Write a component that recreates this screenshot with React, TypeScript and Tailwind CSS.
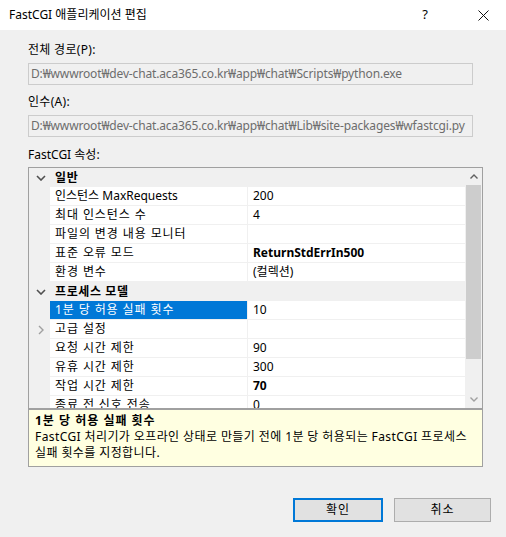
import React from "react";

type Row =
  | { kind: "cat"; label: string }
  | { kind: "prop"; name: string; value: string; bold?: boolean; selected?: boolean; expander?: boolean };

const rows: Row[] = [
  { kind: "cat", label: "일반" },
  { kind: "prop", name: "인스턴스 MaxRequests", value: "200" },
  { kind: "prop", name: "최대 인스턴스 수", value: "4" },
  { kind: "prop", name: "파일의 변경 내용 모니터", value: "" },
  { kind: "prop", name: "표준 오류 모드", value: "ReturnStdErrIn500", bold: true },
  { kind: "prop", name: "환경 변수", value: "(컬렉션)" },
  { kind: "cat", label: "프로세스 모델" },
  { kind: "prop", name: "1분 당 허용 실패 횟수", value: "10", selected: true },
  { kind: "prop", name: "고급 설정", value: "", expander: true },
  { kind: "prop", name: "요청 시간 제한", value: "90" },
  { kind: "prop", name: "유휴 시간 제한", value: "300" },
  { kind: "prop", name: "작업 시간 제한", value: "70", bold: true },
  { kind: "prop", name: "종료 전 신호 전송", value: "0" },
];

const ChevronDown = () => (
  <svg width="10" height="6" viewBox="0 0 10 6">
    <polyline points="1,1 5,5 9,1" fill="none" stroke="#505050" strokeWidth="1.6" />
  </svg>
);

const ChevronRight = () => (
  <svg width="6" height="10" viewBox="0 0 6 10">
    <polyline points="1,1 5,5 1,9" fill="none" stroke="#a0a0a0" strokeWidth="1.4" />
  </svg>
);

// hangul-only labels render a bit wider in the original (Malgun Gothic)
const isHangulOnly = (s: string) => !/[A-Za-z]/.test(s);

export default function App() {
  const font = { fontFamily: '"Noto Sans", "Noto Sans CJK KR", sans-serif' };
  return (
    <div className="w-[506px] h-[537px] bg-[#f0f0f0] text-[12px] text-black overflow-hidden" style={font}>
      {/* Title bar */}
      <div className="h-[30px] bg-white flex items-center">
        <span className="pl-[9px] flex-1 leading-[16px]">FastCGI 애플리케이션 편집</span>
        <span className="w-[20px] text-center text-[13px] mr-[25px]">?</span>
        <div className="w-[46px] h-[30px] flex items-center justify-center">
          <svg width="11" height="11" viewBox="0 0 11 11">
            <path d="M0.5 0.5 L10.5 10.5 M10.5 0.5 L0.5 10.5" stroke="#111" strokeWidth="1" />
          </svg>
        </div>
      </div>

      <div className="pl-[28px] pr-[15px]">
        <div className="mt-[12px] h-[16px] leading-[16px] tracking-[0.3px]">전체 경로(P):</div>
        <div className="mt-[5px] w-[445px] h-[22px] border border-[#cccccc] bg-[#f0f0f0] text-[#6d6d6d] pl-[2px] leading-[20px] whitespace-nowrap overflow-hidden tracking-[-0.15px]">
          D:₩wwwroot₩dev-chat.aca365.co.kr₩app₩chat₩Scripts₩python.exe
        </div>

        <div className="mt-[9px] h-[16px] leading-[16px] tracking-[0.3px]">인수(A):</div>
        <div className="mt-[5px] w-[445px] h-[22px] border border-[#cccccc] bg-[#f0f0f0] text-[#6d6d6d] pl-[2px] leading-[20px] whitespace-nowrap overflow-hidden tracking-[-0.15px]">
          D:₩wwwroot₩dev-chat.aca365.co.kr₩app₩chat₩Lib₩site-packages₩wfastcgi.py
        </div>

        <div className="mt-[10px] h-[16px] leading-[16px]">FastCGI 속성:</div>

        {/* Property grid */}
        <div className="mt-[4px] w-[455px] h-[242px] border border-[#a0a0a0] flex">
          <div className="w-[436px] overflow-hidden">
            {rows.map((r, i) =>
              r.kind === "cat" ? (
                <div key={i} className="h-[19px] flex items-center bg-[#f0f0f0]">
                  <div className="w-[21px] flex justify-center pl-[2px]">
                    <ChevronDown />
                  </div>
                  <span className="pl-[5px] font-bold leading-[16px] tracking-[0.6px]">{r.label}</span>
                </div>
              ) : (
                <div key={i} className="h-[19px] flex bg-[#f0f0f0]">
                  <div className="w-[21px] flex items-center justify-center pl-[3px]">
                    {r.expander && <ChevronRight />}
                  </div>
                  <div
                    className={`w-[197px] h-[18px] pl-[5px] leading-[18px] whitespace-nowrap overflow-hidden ${
                      r.selected ? "bg-[#0078d7] text-white" : "bg-white"
                    } ${isHangulOnly(r.name) ? "tracking-[0.9px]" : "tracking-[0px]"}`}
                  >
                    {r.name}
                  </div>
                  <div className={`ml-[1px] flex-1 h-[18px] pl-[5px] leading-[18px] bg-white whitespace-nowrap ${r.bold ? "font-bold" : ""}`}>
                    {r.value}
                  </div>
                </div>
              )
            )}
          </div>
          {/* Scrollbar */}
          <div className="w-[17px] bg-[#f0f0f0] flex flex-col">
            <div className="h-[17px] flex items-center justify-center">
              <svg width="8" height="5" viewBox="0 0 8 5">
                <polyline points="0.5,4.5 4,1 7.5,4.5" fill="none" stroke="#606060" strokeWidth="1.4" />
              </svg>
            </div>
            <div className="mx-[1px] h-[174px] bg-[#cdcdcd]" />
            <div className="flex-1" />
            <div className="h-[17px] flex items-center justify-center">
              <svg width="8" height="5" viewBox="0 0 8 5">
                <polyline points="0.5,0.5 4,4 7.5,0.5" fill="none" stroke="#a0a0a0" strokeWidth="1.4" />
              </svg>
            </div>
          </div>
        </div>

        {/* Description */}
        <div className="w-[455px] h-[58px] border border-[#a0a0a0] bg-[#ffffe1] px-[6px] pt-[2px]">
          <div className="font-bold leading-[17px] tracking-[1px]">1분 당 허용 실패 횟수</div>
          <div className="leading-[16px] tracking-[0.4px] whitespace-nowrap">
            FastCGI 처리기가 오프라인 상태로 만들기 전에 1분 당 허용되는 FastCGI 프로세스
            <br />
            실패 횟수를 지정합니다.
          </div>
        </div>

        {/* Buttons */}
        <div className="mt-[31px] flex justify-end gap-[11px]">
          <button className="w-[90px] h-[24px] bg-[#e1e1e1] border-2 border-[#0078d7] leading-[20px] tracking-[1px]">확인</button>
          <button className="w-[97px] h-[24px] bg-[#e1e1e1] border border-[#adadad] leading-[22px] tracking-[1px]">취소</button>
        </div>
      </div>
    </div>
  );
}
